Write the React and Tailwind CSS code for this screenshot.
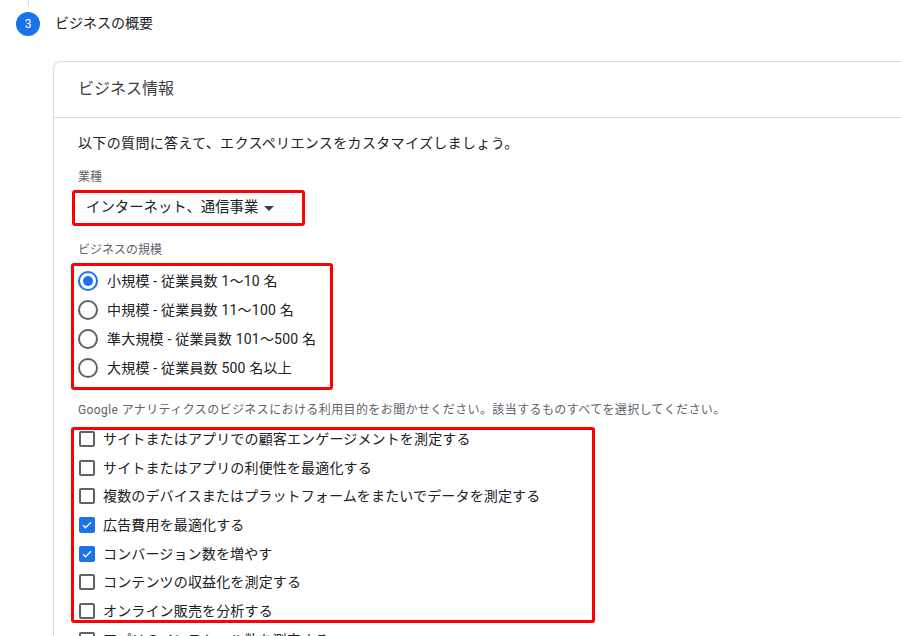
import React from "react";

const font = { fontFamily: '"Roboto", "Noto Sans CJK JP", sans-serif' };

function Radio({ checked, label }) {
  return (
    <div className="flex items-center h-[29px]">
      <div
        className={
          "w-[20px] h-[20px] rounded-full border-2 flex items-center justify-center shrink-0 " +
          (checked ? "border-[#1a73e8]" : "border-[#5f6368]")
        }
      >
        {checked && <div className="w-[10px] h-[10px] rounded-full bg-[#1a73e8]" />}
      </div>
      <span className="ml-[9px] text-[14px] leading-[20px] tracking-[0.2px] text-[#202124] whitespace-nowrap">{label}</span>
    </div>
  );
}

function Check({ checked, label }) {
  return (
    <div className="flex items-center h-[20px]">
      {checked ? (
        <div className="w-[16px] h-[16px] rounded-[2px] bg-[#1a73e8] flex items-center justify-center shrink-0">
          <svg width="12" height="12" viewBox="0 0 24 24" fill="none">
            <path d="M4 12.5l5 5L20 6.5" stroke="#fff" strokeWidth="2.6" />
          </svg>
        </div>
      ) : (
        <div className="w-[16px] h-[16px] rounded-[2px] border-2 border-[#5f6368] shrink-0" />
      )}
      <span className="ml-[8px] text-[14px] leading-[20px] tracking-[0.15px] text-[#202124] whitespace-nowrap">{label}</span>
    </div>
  );
}

export default function App() {
  return (
    <div className="w-[901px] h-[636px] overflow-hidden bg-white" style={font}>
      <div className="flex items-start">
        <div className="ml-[16px] w-6 flex flex-col items-center">
          <div className="w-px h-[6px] bg-[#dadce0]" />
          <div className="mt-[6px] w-6 h-6 rounded-full bg-[#1a73e8] text-white text-[12px] flex items-center justify-center">
            3
          </div>
        </div>
        <div className="ml-[15px] mt-[13px] text-[14px] leading-[20px] text-[#202124]">ビジネスの概要</div>
      </div>

      <div className="ml-[53px] mt-[25px] w-[900px] h-[600px] border-l border-t border-[#dadce0] rounded-tl-[8px]">
        <div className="h-[56px] pl-[24px] pt-[15px] border-b border-[#dadce0]">
          <div className="text-[16px] leading-[24px] text-[#3c4043]">ビジネス情報</div>
        </div>
        <div className="pl-[24px] pt-[15px]">
          <div className="text-[14px] leading-[20px] tracking-[0.35px] text-[#202124]">
            以下の質問に答えて、エクスペリエンスをカスタマイズしましょう。
          </div>

          <div className="mt-[16px] text-[12px] leading-[16px] text-[#5f6368]">業種</div>
          <div className="mt-[5px] ml-[-6px] w-[233px] h-[36px] border-[3px] border-[#ff0000] rounded-[3px] flex items-center pl-[11px]">
            <span className="text-[14.4px] leading-[20px] text-[#202124] whitespace-nowrap">インターネット、通信事業</span>
            <svg className="ml-[6px]" width="10" height="5" viewBox="0 0 10 5">
              <path d="M0 0h10L5 5z" fill="#3c4043" />
            </svg>
          </div>

          <div className="mt-[16px] text-[12px] leading-[16px] text-[#5f6368]">ビジネスの規模</div>
          <div className="mt-[5px] ml-[-7px] w-[262px] h-[127px] border-[3px] border-[#ff0000] rounded-[3px] pl-[4px]">
            <Radio checked label="小規模 - 従業員数 1〜10 名" />
            <Radio label="中規模 - 従業員数 11〜100 名" />
            <Radio label="準大規模 - 従業員数 101〜500 名" />
            <Radio label="大規模 - 従業員数 500 名以上" />
          </div>

          <div className="mt-[12px] text-[12px] leading-[16px] tracking-[0.4px] text-[#5f6368] whitespace-nowrap">
            Google アナリティクスのビジネスにおける利用目的をお聞かせください。該当するものすべてを選択してください。
          </div>
          <div className="mt-[9px] ml-[-7px] w-[524px] h-[196px] border-[3px] border-[#ff0000] rounded-[3px] pl-[5px]">
            <div className="mt-[-1px] flex flex-col gap-[8.67px]">
              <Check label="サイトまたはアプリでの顧客エンゲージメントを測定する" />
              <Check label="サイトまたはアプリの利便性を最適化する" />
              <Check label="複数のデバイスまたはプラットフォームをまたいでデータを測定する" />
              <Check checked label="広告費用を最適化する" />
              <Check checked label="コンバージョン数を増やす" />
              <Check label="コンテンツの収益化を測定する" />
              <Check label="オンライン販売を分析する" />
            </div>
          </div>
          <div className="mt-[7px] ml-[1px]">
            <Check label="アプリのインストール数を測定する" />
          </div>
        </div>
      </div>
    </div>
  );
}
